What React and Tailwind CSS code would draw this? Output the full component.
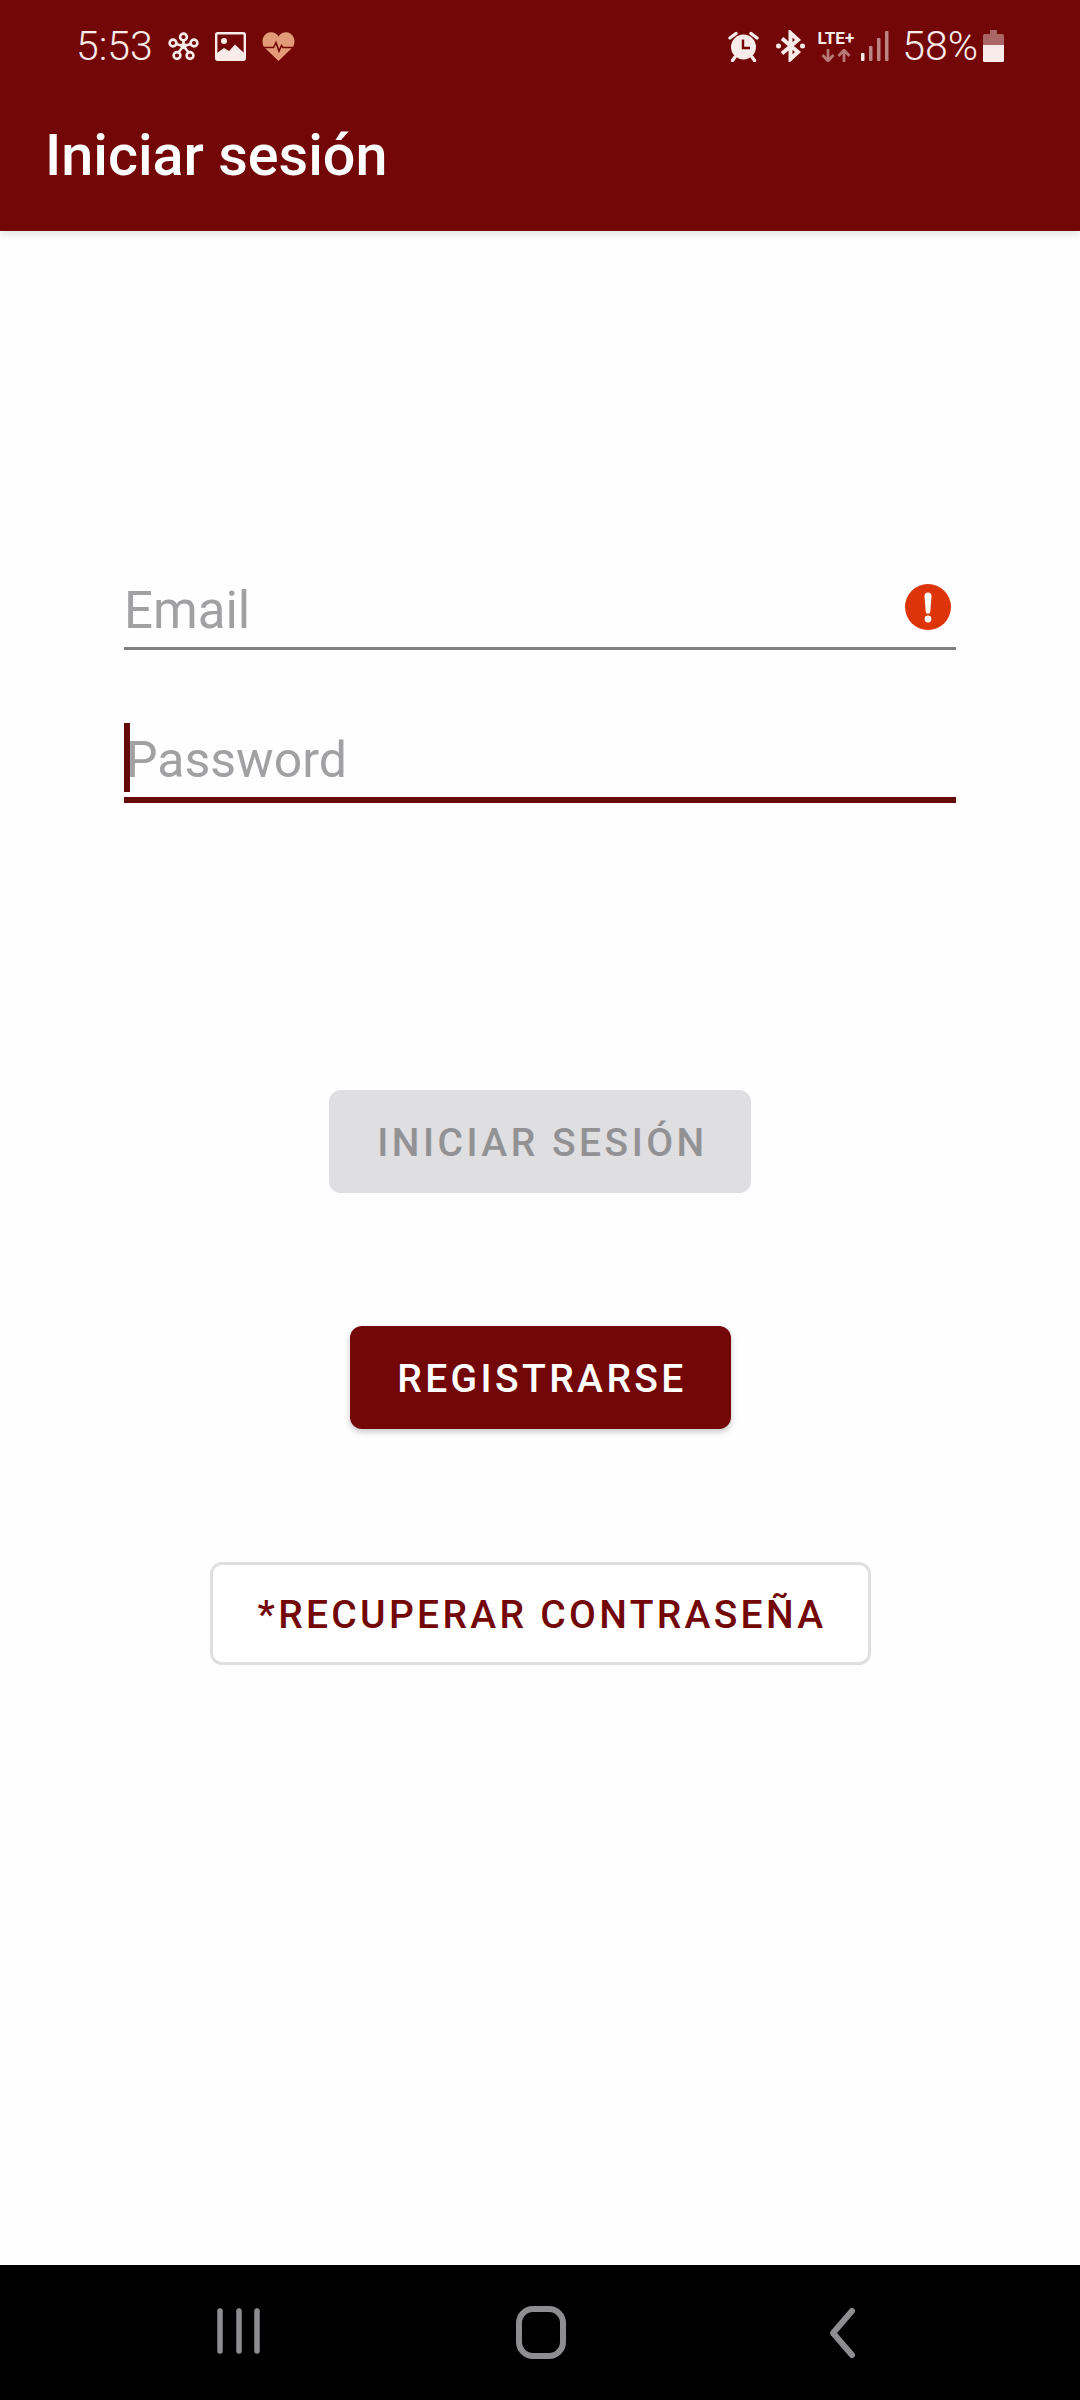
import React from "react";

const Net = () => (
  <svg width="31" height="29" viewBox="0 0 31 29" fill="none" stroke="#f7ecea" strokeWidth="2.6">
    <path d="M15.5 14L15.5 7M15.5 14L8 12M15.5 14L23 12M15.5 14L10 21M15.5 14L21 21" />
    <circle cx="15.5" cy="14" r="3" fill="#f7ecea" stroke="none" />
    <circle cx="15.5" cy="5" r="3.4" />
    <circle cx="5" cy="11" r="3.4" />
    <circle cx="26" cy="11" r="3.4" />
    <circle cx="9" cy="23.5" r="3.4" />
    <circle cx="22" cy="23.5" r="3.4" />
  </svg>
);

const Pic = () => (
  <svg width="31" height="29" viewBox="0 0 31 29">
    <rect x="1.2" y="1.2" width="28.6" height="26.6" rx="1.5" fill="none" stroke="#f7ecea" strokeWidth="2.4" />
    <circle cx="9" cy="9" r="3" fill="#f7ecea" />
    <path d="M2 27V21L9 16L14 19L20 12.5L29 21V27Z" fill="#f7ecea" />
  </svg>
);

const Heart = () => (
  <svg width="33" height="29" viewBox="0 0 33 29">
    <path d="M16.5 29L2.5 15.5C-1.5 10.5 0.5 1 8.5 0.3C12 0 15 1.8 16.5 4.5C18 1.8 21 0 24.5 0.3C32.5 1 34.5 10.5 30.5 15.5Z" fill="#e39a78" />
    <path d="M2 15.5H11.5L14 10.5L17 19L19.5 13.5L21 15.5H31" fill="none" stroke="#730606" strokeWidth="1.6" />
  </svg>
);

const Alarm = () => (
  <svg width="31" height="31" viewBox="0 0 31 31">
    <circle cx="15.5" cy="16" r="12.5" fill="#f7ecea" />
    <path d="M2 7L8 2.5M29 7L23 2.5M7 26L4.5 29.5M24 26L26.5 29.5" stroke="#f7ecea" strokeWidth="3.4" strokeLinecap="round" />
    <path d="M15 8.5V17H22" fill="none" stroke="#730606" strokeWidth="2.4" />
  </svg>
);

const Bluetooth = () => (
  <svg width="29" height="32" viewBox="0 0 29 32">
    <path d="M6 8.5L22 22L14.5 29V3L22 10L6 23.5" fill="none" stroke="#f7ecea" strokeWidth="4" />
    <circle cx="2.5" cy="16" r="2.5" fill="#f7ecea" />
    <circle cx="26.5" cy="16" r="2.5" fill="#f7ecea" />
  </svg>
);

const Arrows = () => (
  <svg width="32" height="13" viewBox="0 0 32 13">
    <path d="M8 0V11M2.5 6L8 12L13.5 6M24 13V2M18.5 7L24 1L29.5 7" fill="none" stroke="#f7ecea" strokeOpacity="0.5" strokeWidth="2.8" />
  </svg>
);

const Signal = () => (
  <svg width="28" height="30" viewBox="0 0 28 30">
    <rect x="0" y="22" width="3.5" height="8" rx="1" fill="#f7ecea" />
    <rect x="8" y="15" width="3.5" height="15" rx="1" fill="#f7ecea" fillOpacity="0.55" />
    <rect x="16" y="7" width="3.5" height="23" rx="1" fill="#f7ecea" fillOpacity="0.55" />
    <rect x="24" y="0" width="3.5" height="30" rx="1" fill="#f7ecea" fillOpacity="0.55" />
  </svg>
);

const Battery = () => (
  <svg width="21" height="32" viewBox="0 0 21 32">
    <path d="M7 0H14V4H19.5A1.5 1.5 0 0 1 21 5.5V15H0V5.5A1.5 1.5 0 0 1 1.5 4H7Z" fill="#f7ecea" fillOpacity="0.42" />
    <path d="M0 15H21V30.5A1.5 1.5 0 0 1 19.5 32H1.5A1.5 1.5 0 0 1 0 30.5Z" fill="#f7ecea" />
  </svg>
);

export default function App() {
  return (
    <div className="flex h-[2400px] w-[1080px] flex-col overflow-hidden bg-[#fefefe] font-['Roboto',sans-serif]">
      <header className="z-10 flex h-[231px] shrink-0 flex-col bg-[#730606] shadow-[0_3px_8px_rgba(0,0,0,0.12)]">
        <div className="flex h-[92px] items-center justify-between pl-[76px] pr-[76px] text-[#f7ecea]">
          <div className="flex items-center gap-[16px]">
            <span className="-mr-[1px] text-[41px] leading-[46px] font-light">5:53</span>
            <Net />
            <Pic />
            <Heart />
          </div>
          <div className="flex items-center">
            <Alarm />
            <div className="ml-[17px]"><Bluetooth /></div>
            <div className="ml-[13px] flex flex-col items-center gap-[3px]">
              <span className="text-[17px] leading-[16px] font-bold">LTE+</span>
              <Arrows />
            </div>
            <div className="ml-[7px]"><Signal /></div>
            <span className="ml-[13px] text-[41px] leading-[46px] font-light">58%</span>
            <div className="ml-[5px]"><Battery /></div>
          </div>
        </div>
        <h1 className="pl-[45px] pt-[32px] text-[57.5px] leading-[64px] font-medium text-white">Iniciar sesión</h1>
      </header>

      <main className="flex flex-1 flex-col items-center">
        <div className="mt-[350px] flex h-[69px] w-[832px] items-start justify-between border-b-[3px] border-[#808080]">
          <span className="text-[51px] leading-[60px] text-[#a1a0a3]">Email</span>
          <svg width="46" height="46" viewBox="0 0 46 46" className="mt-[3px] mr-[5px]">
            <circle cx="23" cy="23" r="23" fill="#dd3409" />
            <path d="M19.5 12a3.5 3.5 0 0 1 7 0L25.3 27.5a2.3 2.3 0 0 1-4.6 0Z" fill="#fff" />
            <circle cx="23" cy="35" r="3.4" fill="#fff" />
          </svg>
        </div>
        <div className="relative mt-[73px] flex h-[80px] w-[832px] items-end border-b-[6px] border-[#640a0a] pb-[7px]">
          <div className="absolute left-0 top-0 h-[69px] w-[6px] bg-[#640a0a]" />
          <span className="pl-[2px] text-[50px] leading-[60px] text-[#a1a0a3]">Password</span>
        </div>

        <button className="mt-[287px] h-[103px] w-[422px] rounded-[12px] bg-[#dfdee1] pl-[5px] pt-[4px] text-[39px] font-medium tracking-[3.5px] text-[#929194]">
          INICIAR SESIÓN
        </button>
        <button className="mt-[133px] h-[103px] w-[381px] rounded-[12px] bg-[#730606] pl-[4px] pt-[4px] text-[39px] font-medium tracking-[3.4px] text-white shadow-[0_3px_6px_rgba(0,0,0,0.22)]">
          REGISTRARSE
        </button>
        <button className="mt-[133px] h-[103px] w-[661px] rounded-[12px] border-[3px] border-[#dfdfe2] bg-white pl-[4px] pt-[3px] text-[39px] font-medium tracking-[3.3px] text-[#730606]">
          *RECUPERAR CONTRASEÑA
        </button>
      </main>

      <nav className="h-[135px] shrink-0 bg-black">
        <svg width="1080" height="135" viewBox="0 0 1080 135" fill="none" stroke="#8e8d90" strokeLinecap="round">
          <path d="M220 46V86M239 46V86M257 46V86" strokeWidth="5.5" />
          <rect x="519" y="44" width="44" height="47" rx="14" strokeWidth="6" />
          <path d="M852 46L833 68L852 90" strokeWidth="6" strokeLinejoin="round" />
        </svg>
      </nav>
    </div>
  );
}
